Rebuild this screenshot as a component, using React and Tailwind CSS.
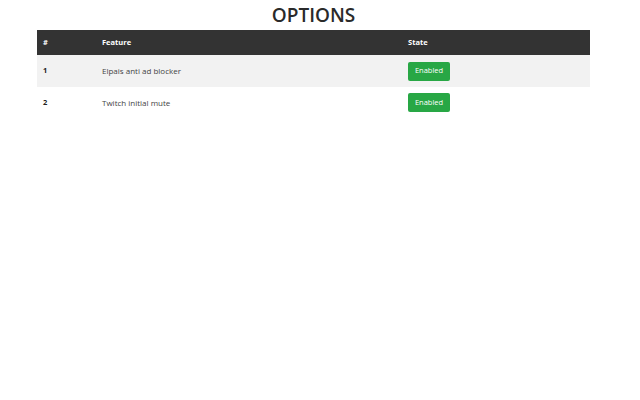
export default function App() {
  const rows = [
    { id: 1, name: "Elpais anti ad blocker" },
    { id: 2, name: "Twitch initial mute" },
  ];
  return (
    <div className="w-[640px] h-[400px] bg-white text-[#212529]" style={{ fontFamily: '"Open Sans", "Noto Sans", sans-serif' }}>
      <div className="w-[627px]">
        <h1 className="text-center text-[19px] leading-[24px] pt-[3px] h-[30px] font-semibold text-[#2a2a2a]">OPTIONS</h1>
        <table className="ml-[37px] w-[553px] border-collapse text-[7.5px]">
          <thead>
            <tr className="bg-[#333333] text-white h-[25px]">
              <th className="text-left font-bold pl-[6px] w-[65px]">#</th>
              <th className="text-left font-bold w-[306px]">Feature</th>
              <th className="text-left font-bold">State</th>
            </tr>
          </thead>
          <tbody>
            {rows.map((r, i) => (
              <tr key={r.id} className={i % 2 === 0 ? "bg-[#f2f2f2] h-[32px]" : "bg-white h-[31px]"}>
                <td className="pl-[6px] font-bold text-[#222]">{r.id}</td>
                <td className="text-[#444] text-[8px]">{r.name}</td>
                <td>
                  <span className="inline-flex items-center justify-center w-[42px] h-[19px] rounded-[2px] bg-[#28a745] text-white text-[7.5px]">Enabled</span>
                </td>
              </tr>
            ))}
          </tbody>
        </table>
      </div>
    </div>
  );
}
